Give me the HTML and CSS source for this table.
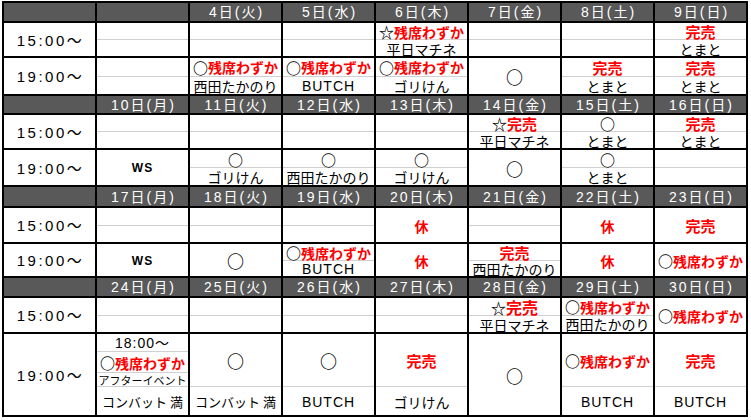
FILE: index.html
```html
<!DOCTYPE html>
<html lang="ja">
<head>
<meta charset="utf-8">
<title>スケジュール</title>
<link rel="stylesheet" href="styles.css">
</head>
<body>
<div class="sched">
  <!-- block 1 -->
  <div class="hd"></div>
  <div class="hd"></div>
  <div class="hd">4日(火)</div>
  <div class="hd">5日(水)</div>
  <div class="hd">6日(木)</div>
  <div class="hd">7日(金)</div>
  <div class="hd">8日(土)</div>
  <div class="hd">9日(日)</div>

  <div class="time">15:00～</div>
  <div class="c"><div class="s"></div><div class="s"></div></div>
  <div class="c"><div class="s"></div><div class="s"></div></div>
  <div class="c"><div class="s"></div><div class="s"></div></div>
  <div class="c"><div class="s"><span class="o">☆</span><span class="r">残席わずか</span></div><div class="s">平日マチネ</div></div>
  <div class="c"><div class="s"></div><div class="s"></div></div>
  <div class="c"><div class="s"></div><div class="s"></div></div>
  <div class="c"><div class="s"><span class="sold">完売</span></div><div class="s">とまと</div></div>

  <div class="time">19:00～</div>
  <div class="c"><div class="s"></div><div class="s"></div></div>
  <div class="c"><div class="s"><span class="o">○</span><span class="r">残席わずか</span></div><div class="s">西田たかのり</div></div>
  <div class="c"><div class="s"><span class="o">○</span><span class="r">残席わずか</span></div><div class="s en">BUTCH</div></div>
  <div class="c"><div class="s"><span class="o">○</span><span class="r">残席わずか</span></div><div class="s">ゴリけん</div></div>
  <div class="c"><div class="s maru">○</div></div>
  <div class="c"><div class="s"><span class="sold">完売</span></div><div class="s">とまと</div></div>
  <div class="c"><div class="s"><span class="sold">完売</span></div><div class="s">とまと</div></div>

  <!-- block 2 -->
  <div class="hd"></div>
  <div class="hd">10日(月)</div>
  <div class="hd">11日(火)</div>
  <div class="hd">12日(水)</div>
  <div class="hd">13日(木)</div>
  <div class="hd">14日(金)</div>
  <div class="hd">15日(土)</div>
  <div class="hd">16日(日)</div>

  <div class="time">15:00～</div>
  <div class="c"><div class="s"></div><div class="s"></div></div>
  <div class="c"><div class="s"></div><div class="s"></div></div>
  <div class="c"><div class="s"></div><div class="s"></div></div>
  <div class="c"><div class="s"></div><div class="s"></div></div>
  <div class="c"><div class="s"><span class="o">☆</span><span class="sold">完売</span></div><div class="s">平日マチネ</div></div>
  <div class="c"><div class="s maru">○</div><div class="s">とまと</div></div>
  <div class="c"><div class="s"><span class="sold">完売</span></div><div class="s">とまと</div></div>

  <div class="time">19:00～</div>
  <div class="c"><div class="s ws">WS</div></div>
  <div class="c"><div class="s maru">○</div><div class="s">ゴリけん</div></div>
  <div class="c"><div class="s maru">○</div><div class="s">西田たかのり</div></div>
  <div class="c"><div class="s maru">○</div><div class="s">ゴリけん</div></div>
  <div class="c"><div class="s maru">○</div></div>
  <div class="c"><div class="s maru">○</div><div class="s">とまと</div></div>
  <div class="c"><div class="s"></div><div class="s"></div></div>

  <!-- block 3 -->
  <div class="hd"></div>
  <div class="hd">17日(月)</div>
  <div class="hd">18日(火)</div>
  <div class="hd">19日(水)</div>
  <div class="hd">20日(木)</div>
  <div class="hd">21日(金)</div>
  <div class="hd">22日(土)</div>
  <div class="hd">23日(日)</div>

  <div class="time">15:00～</div>
  <div class="c"><div class="s"></div><div class="s"></div></div>
  <div class="c"><div class="s"></div><div class="s"></div></div>
  <div class="c"><div class="s"></div><div class="s"></div></div>
  <div class="c"><div class="s"><span class="r">休</span></div></div>
  <div class="c"><div class="s"></div><div class="s"></div></div>
  <div class="c"><div class="s"><span class="r">休</span></div></div>
  <div class="c"><div class="s"><span class="sold">完売</span></div></div>

  <div class="time">19:00～</div>
  <div class="c"><div class="s ws">WS</div></div>
  <div class="c"><div class="s maru">○</div></div>
  <div class="c"><div class="s"><span class="o">○</span><span class="r">残席わずか</span></div><div class="s en">BUTCH</div></div>
  <div class="c"><div class="s"><span class="r">休</span></div></div>
  <div class="c"><div class="s"><span class="sold">完売</span></div><div class="s">西田たかのり</div></div>
  <div class="c"><div class="s"><span class="r">休</span></div></div>
  <div class="c"><div class="s"><span class="o">○</span><span class="r">残席わずか</span></div></div>

  <!-- block 4 -->
  <div class="hd"></div>
  <div class="hd">24日(月)</div>
  <div class="hd">25日(火)</div>
  <div class="hd">26日(水)</div>
  <div class="hd">27日(木)</div>
  <div class="hd">28日(金)</div>
  <div class="hd">29日(土)</div>
  <div class="hd">30日(日)</div>

  <div class="time">15:00～</div>
  <div class="c"><div class="s"></div><div class="s"></div></div>
  <div class="c"><div class="s"></div><div class="s"></div></div>
  <div class="c"><div class="s"></div><div class="s"></div></div>
  <div class="c"><div class="s"></div><div class="s"></div></div>
  <div class="c"><div class="s big"><span class="o">☆</span><span class="sold">完売</span></div><div class="s">平日マチネ</div></div>
  <div class="c"><div class="s"><span class="o">○</span><span class="r">残席わずか</span></div><div class="s">西田たかのり</div></div>
  <div class="c"><div class="s"><span class="o">○</span><span class="r">残席わずか</span></div></div>

  <div class="time">19:00～</div>
  <div class="c event">
    <div class="s t1 tm">18:00～</div>
    <div class="s t2"><span class="o">○</span><span class="r">残席わずか</span></div>
    <div class="s t3 sm">アフターイベント</div>
    <div class="s t4 kb">コンバット 満</div>
  </div>
  <div class="c tall"><div class="s maru">○</div><div class="s kb">コンバット 満</div></div>
  <div class="c tall"><div class="s maru">○</div><div class="s en">BUTCH</div></div>
  <div class="c tall"><div class="s"><span class="sold">完売</span></div><div class="s">ゴリけん</div></div>
  <div class="c"><div class="s maru">○</div></div>
  <div class="c tall"><div class="s"><span class="o">○</span><span class="r">残席わずか</span></div><div class="s en">BUTCH</div></div>
  <div class="c tall"><div class="s"><span class="sold">完売</span></div><div class="s en">BUTCH</div></div>
</div>
</body>
</html>
```
FILE: styles.css
```css
* {
  box-sizing: border-box;
}

body {
  margin: 0;
  background: #ffffff;
  font-family: "Liberation Sans", "Noto Sans CJK JP", sans-serif;
  color: #000000;
}

.sched {
  display: grid;
  grid-template-columns: repeat(8, 91px);
  grid-template-rows: 18px 33px 36px 17px 33px 35px 19px 34px 32px 18px 34px 81px;
  gap: 2px;
  padding: 2px;
  width: 746px;
  margin: 1px 0 0 2px;
  background: #000000;
}

.hd {
  background: #595959;
  color: #ffffff;
  font-size: 14px;
  line-height: 1;
  letter-spacing: 2px;
  display: flex;
  align-items: center;
  justify-content: center;
  padding-left: 2px;
}

.time {
  background: #ffffff;
  display: flex;
  align-items: center;
  justify-content: center;
  font-size: 15px;
  line-height: 1;
  letter-spacing: 2.5px;
  padding-left: 2px;
  padding-top: 1px;
}

.c {
  background: #ffffff;
  display: flex;
  flex-direction: column;
  font-family: "Noto Sans CJK JP", sans-serif;
  font-size: 14px;
  line-height: 1;
}

.s {
  flex: 1 1 0;
  display: flex;
  align-items: center;
  justify-content: center;
  white-space: nowrap;
  padding-top: 1px;
}

.s:not(:last-child) {
  border-bottom: 1px solid #d0d0d0;
}

.o {
  font-weight: 700;
  font-size: 15px;
}

.r {
  color: #ff0000;
  font-weight: 700;
}

.sold {
  color: #ff0000;
  font-weight: 700;
  font-size: 15px;
}

.big .sold {
  font-size: 16px;
}

.maru {
  font-size: 17px;
  font-weight: 700;
}

.c:not(.tall) .s.maru:not(:only-child) {
  font-size: 15px;
}

.en {
  font-family: "Liberation Sans", sans-serif;
  font-size: 14px;
  letter-spacing: 1px;
}

.ws {
  font-family: "Liberation Sans", sans-serif;
  font-size: 12px;
  font-weight: 700;
  letter-spacing: 1px;
}

.kb {
  font-size: 13px;
}

.sm {
  font-size: 11px;
}

.tm {
  font-family: "Liberation Sans", "Noto Sans CJK JP", sans-serif;
  letter-spacing: 1px;
}

.tall .s:first-child {
  flex: 0 0 53px;
}

.event .t1 {
  flex: 0 0 18px;
}

.event .t2 {
  flex: 0 0 21px;
}

.event .t3 {
  flex: 0 0 14px;
}

.event .t4 {
  flex: 1 1 0;
}
```
